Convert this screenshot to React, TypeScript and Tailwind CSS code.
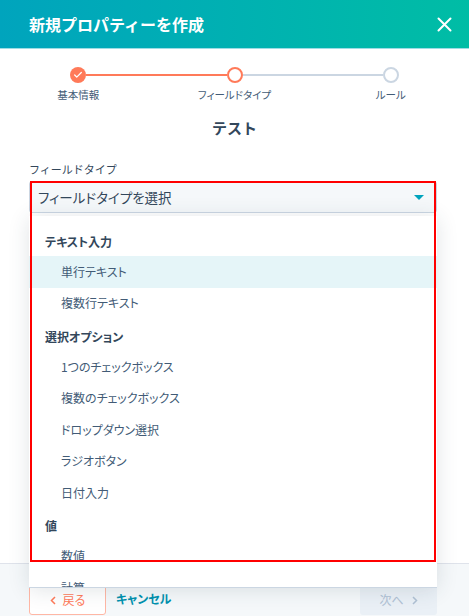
import { Check } from "lucide-react";

/* ── Dropdown data ── */

type Group = { label: string; items: string[] };

const GROUPS: Group[] = [
  { label: "テキスト入力", items: ["単行テキスト", "複数行テキスト"] },
  {
    label: "選択オプション",
    items: [
      "1つのチェックボックス",
      "複数のチェックボックス",
      "ドロップダウン選択",
      "ラジオボタン",
      "日付入力",
    ],
  },
  { label: "値", items: ["数値", "計算"] },
];

const ACTIVE_ITEM = "単行テキスト";

/* ── Stepper ── */

function Step({
  label,
  state,
  left,
  right,
}: {
  label: string;
  state: "done" | "current" | "todo";
  left: string;
  right: string;
}) {
  return (
    <div className="flex flex-col items-center">
      <div className="flex h-[16px] w-full items-center">
        <div className={`h-[2px] flex-1 ${left}`} />
        {state === "done" && (
          <div className="flex h-[16px] w-[16px] items-center justify-center rounded-full bg-[#ff7a59]">
            <Check size={10} strokeWidth={3} color="#fff" />
          </div>
        )}
        {state === "current" && (
          <div className="h-[16px] w-[16px] rounded-full border-2 border-[#ff7a59] bg-white" />
        )}
        {state === "todo" && (
          <div className="h-[16px] w-[16px] rounded-full border-2 border-[#cbd6e2] bg-white" />
        )}
        <div className={`h-[2px] flex-1 ${right}`} />
      </div>
      <span className="mt-[6px] text-[10.5px] leading-[12px] text-[#425b76] [font-feature-settings:'palt']">
        {label}
      </span>
    </div>
  );
}

/* ── Component ── */

export default function App() {
  return (
    <div className="relative flex h-[616px] w-[469px] flex-col overflow-hidden bg-white font-['Noto_Sans_CJK_JP',sans-serif] text-[#33475b]">
      {/* Header */}
      <header className="flex h-[49px] shrink-0 items-center justify-between border-b border-[#9edce4] bg-gradient-to-r from-[#00a4bd] to-[#00bda5] pl-[29px] pr-[17px]">
        <h1 className="text-[16px] font-bold leading-[22px] text-white">
          新規プロパティーを作成
        </h1>
        <svg width="15" height="15" viewBox="0 0 15 15" fill="none">
          <path
            d="M1.5 1.5L13.5 13.5M13.5 1.5L1.5 13.5"
            stroke="#fff"
            strokeWidth="2"
            strokeLinecap="round"
          />
        </svg>
      </header>

      {/* Body */}
      <main className="relative flex-1">
        <div className="grid grid-cols-3 pt-[18px]">
          <Step label="基本情報" state="done" left="bg-transparent" right="bg-[#ff7a59]" />
          <Step label="フィールドタイプ" state="current" left="bg-[#ff7a59]" right="bg-[#cbd6e2]" />
          <Step label="ルール" state="todo" left="bg-[#cbd6e2]" right="bg-transparent" />
        </div>

        <h2 className="mt-[16px] text-center text-[15px] font-bold leading-[22px]">
          テスト
        </h2>

        <div className="ml-[29px] mt-[23px] text-[11px] leading-[14px] text-[#33475b]">
          フィールドタイプ
        </div>

        <div className="relative ml-[29px] mt-[5px] w-[408px]">
          {/* Select */}
          <div className="flex h-[32px] items-center justify-between rounded-[3px] border border-[#cbd6e2] bg-[#f5f8fa] pl-[8px] pr-[12px]">
            <span className="text-[13.5px] leading-[18px] text-[#33475b] [font-feature-settings:'palt']">
              フィールドタイプを選択
            </span>
            <svg width="10" height="5" viewBox="0 0 10 5">
              <path d="M0 0H10L5 5Z" fill="#00a4bd" />
            </svg>
          </div>

          {/* Menu */}
          <div className="absolute left-0 right-0 top-[35px] z-10 h-[372px] overflow-hidden border-b border-[#cbd6e2] bg-white pt-[8px] shadow-[0_2px_20px_rgba(45,62,80,0.14)] [font-feature-settings:'palt']">
            {GROUPS.map((g) => (
              <div key={g.label}>
                <div className="flex h-[32px] items-center pl-[16px] pt-[3px] text-[12px] font-bold leading-[16px] text-[#33475b]">
                  {g.label}
                </div>
                {g.items.map((item) => (
                  <div
                    key={item}
                    className={`flex h-[31.5px] items-center pl-[32px] text-[12px] leading-[16px] text-[#425b76] ${
                      item === ACTIVE_ITEM ? "bg-[#e5f5f8]" : ""
                    }`}
                  >
                    {item}
                  </div>
                ))}
              </div>
            ))}
          </div>

          {/* Red highlight frame */}
          <div className="pointer-events-none absolute left-[1px] right-[1px] top-0 z-20 h-[381px] border-2 border-[#ff0000]" />
        </div>
      </main>

      {/* Footer */}
      <footer className="flex h-[53px] shrink-0 items-start border-t border-[#dfe3eb] bg-[#f5f8fa] pl-[29px] pr-[32px] pt-[20px] [font-feature-settings:'palt']">
        <button className="flex h-[31px] w-[77px] items-center justify-center gap-[7px] rounded-[3px] border border-[#ffb7a5] bg-white pt-[1px] text-[12px] text-[#ff7a59]">
          <svg width="6" height="9" viewBox="0 0 6 9" fill="none">
            <path d="M5 1L1.5 4.5L5 8" stroke="#ff7a59" strokeWidth="1.5" />
          </svg>
          戻る
        </button>
        <span className="ml-[10px] flex h-[30px] items-center text-[12px] font-bold text-[#0091ae]">
          キャンセル
        </span>
        <button className="ml-auto flex h-[31px] w-[77px] items-center justify-center gap-[8px] rounded-[3px] bg-[#eaf0f6] pt-[1px] text-[12px] text-[#b0c1d4]">
          次へ
          <svg width="6" height="9" viewBox="0 0 6 9" fill="none">
            <path d="M1 1L4.5 4.5L1 8" stroke="#b0c1d4" strokeWidth="1.5" />
          </svg>
        </button>
      </footer>
    </div>
  );
}
